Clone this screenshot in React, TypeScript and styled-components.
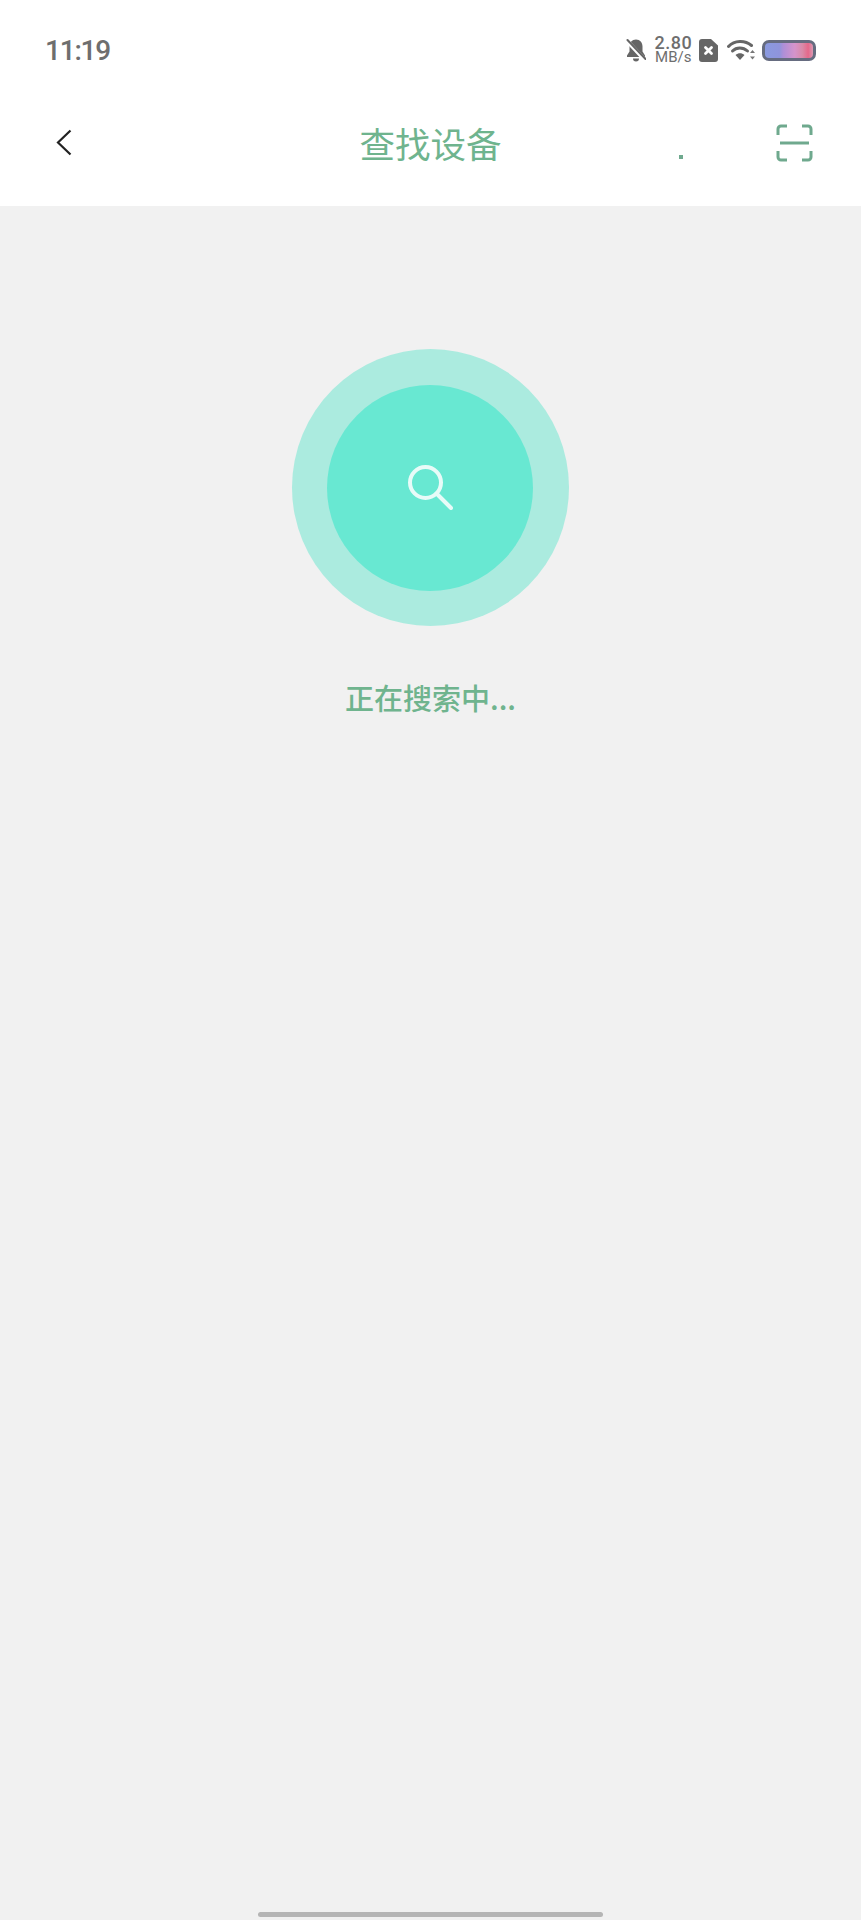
import styled, { createGlobalStyle } from 'styled-components'

const GlobalStyle = createGlobalStyle`
  html, body {
    margin: 0;
    padding: 0;
    background: #f1f1f1;
  }

  body {
    font-family: "Noto Sans", "Noto Sans CJK SC", sans-serif;
  }
`

const Page = styled.div`
  display: flex;
  flex-direction: column;
  height: 1920px;
  width: 861px;
  background: #f1f1f1;
`

const Header = styled.header`
  background: #fff;
  height: 206px;
  flex: none;
`

const StatusBar = styled.div`
  align-items: center;
  display: flex;
  height: 100px;
  justify-content: space-between;
  padding: 0 45px 0 45px;
`

const Time = styled.span`
  color: #6e6e6e;
  font-family: "Roboto", sans-serif;
  font-size: 28px;
  font-weight: 500;
  letter-spacing: -1.2px;
`

const StatusIcons = styled.div`
  align-items: center;
  display: flex;
`

const Speed = styled.div`
  color: #6e6e6e;
  font-family: "Roboto", sans-serif;
  font-size: 15px;
  font-weight: 400;
  line-height: 15px;
  margin: 0 3px 0 5px;
  text-align: center;

  &::first-line {
    font-size: 18px;
    font-weight: 500;
    letter-spacing: 0.5px;
  }
`

const Battery = styled.div`
  background: linear-gradient(90deg, #8a9ae0 0%, #8f94dc 30%, #ae8fd8 38%, #d594cb 62%, #d98aa8 78%, #e5688a 90%, #d99ab4 100%);
  border: 3px solid #666c80;
  border-radius: 7px;
  box-sizing: border-box;
  height: 21px;
  margin-left: 6px;
  width: 54px;
`

const WifiIcon = styled.svg`
  margin-left: 9px;
`

const NavBar = styled.nav`
  align-items: center;
  display: grid;
  grid-template-columns: 1fr auto 1fr;
  height: 85px;
  padding: 0 48px;
`

const BackIcon = styled.svg`
  margin-left: 8px;
`

const Title = styled.h1`
  color: #6fb48e;
  font-family: "Noto Sans CJK SC", sans-serif;
  font-size: 35.5px;
  font-weight: 400;
  margin: 0;
`

const NavRight = styled.div`
  align-items: center;
  display: flex;
  gap: 93px;
  justify-content: flex-end;
`

const Speck = styled.span`
  align-self: flex-end;
  background: #6fa98e;
  height: 4px;
  margin-bottom: 3px;
  width: 4px;
`

const Content = styled.main`
  align-items: center;
  display: flex;
  flex: 1;
  flex-direction: column;
  padding-top: 143px;
`

const OuterCircle = styled.div`
  align-items: center;
  background: #abebdf;
  border-radius: 50%;
  display: flex;
  height: 277px;
  justify-content: center;
  width: 277px;
`

const InnerCircle = styled.div`
  align-items: center;
  background: #68e8d2;
  border-radius: 50%;
  display: flex;
  height: 206px;
  justify-content: center;
  margin-left: -1px;
  width: 206px;
`

const Status = styled.p`
  color: #6fb48e;
  font-family: "Noto Sans CJK SC", sans-serif;
  font-size: 29px;
  font-weight: 500;
  line-height: 40px;
  margin: 51px 0 0;
`

const HomeBar = styled.div`
  align-self: center;
  background: #b5b5b5;
  border-radius: 3px;
  flex: none;
  height: 5px;
  margin-bottom: 3px;
  width: 345px;
`

const App = () => (
  <Page>
    <GlobalStyle />
    <Header>
      <StatusBar>
        <Time>11:19</Time>
        <StatusIcons>
          <svg width="20" height="24" viewBox="0 0 20 24">
            <path d="M10 1.5c-4 0-6.5 3-6.5 7v5L1 17.5v1.5h18v-1.5l-2.500-4v-5c0-4-2.500-7-6.500-7z" fill="#666" />
            <path d="M7 20.500h6a3 3 0 0 1-6 0z" fill="#666" />
            <path d="M1 3l18 19" stroke="#fff" strokeWidth="4" />
            <path d="M1.500 2l18 19" stroke="#666" strokeWidth="2" strokeLinecap="round" />
          </svg>
          <Speed>
            2.80
            <br />
            MB/s
          </Speed>
          <svg width="19" height="23" viewBox="0 0 19 23">
            <path d="M3 0h9l7 6.500V20a3 3 0 0 1-3 3H3a3 3 0 0 1-3-3V3a3 3 0 0 1 3-3z" fill="#666" />
            <path d="M6.500 8.500l6 6M12.500 8.500l-6 6" stroke="#fff" strokeWidth="2.800" strokeLinecap="round" />
          </svg>
          <WifiIcon width="29" height="22" viewBox="0 0 29 22">
            <path d="M1.500 7.500C7.500 1 18 1 24.500 6.500" fill="none" stroke="#666" strokeWidth="3" strokeLinecap="round" />
            <path d="M5.500 12c4-4 10.500-4 15 0" fill="none" stroke="#666" strokeWidth="3" strokeLinecap="round" />
            <path d="M8.500 16c2.800-2.400 6.200-2.400 9 0l-4.500 5z" fill="#666" />
            <path d="M25.500 11l-2.500 3h5zM25.500 20.500l-2.500-3h5z" fill="#777" />
          </WifiIcon>
          <Battery />
        </StatusIcons>
      </StatusBar>
      <NavBar>
        <BackIcon width="16" height="27" viewBox="0 0 16 27" fill="none">
          <path d="M14.500 1.500L2 13.500l12.500 12" stroke="#222" strokeWidth="2.200" />
        </BackIcon>
        <Title>查找设备</Title>
        <NavRight>
          <Speck />
          <svg width="37" height="38" viewBox="0 0 37 38" fill="none" stroke="#6fa98e" strokeWidth="3">
            <path d="M11 2H5a3 3 0 0 0-3 3v6" />
            <path d="M26 2h6a3 3 0 0 1 3 3v6" />
            <path d="M4 19h29" />
            <path d="M2 27v6a3 3 0 0 0 3 3h6" />
            <path d="M35 27v6a3 3 0 0 1-3 3h-6" />
          </svg>
        </NavRight>
      </NavBar>
    </Header>
    <Content>
      <OuterCircle>
        <InnerCircle>
          <svg width="45" height="45" viewBox="0 0 45 45" fill="none" stroke="#e8fbf8" strokeWidth="4">
            <circle cx="17.500" cy="17.500" r="15.500" />
            <path d="M28.500 28.500L43 43" strokeLinecap="round" />
          </svg>
        </InnerCircle>
      </OuterCircle>
      <Status>正在搜索中...</Status>
    </Content>
    <HomeBar />
  </Page>
)

export default App
